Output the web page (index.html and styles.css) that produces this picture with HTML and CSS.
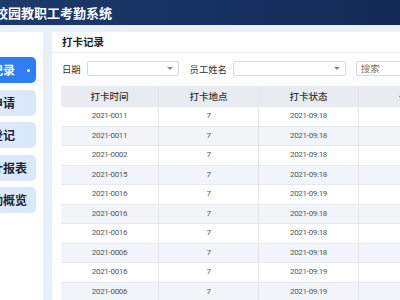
FILE: index.html
```html
<!DOCTYPE html>
<html lang="zh-CN">
<head>
    <meta charset="UTF-8" />
    <meta name="viewport" content="width=device-width, initial-scale=1.0"/>
    <title>校园教职工考勤系统</title>
    <link rel="stylesheet" href="styles.css">
</head>
<body>
    <header class="topbar">
        <h1 class="site-title">校园教职工考勤系统</h1>
    </header>
    <div class="layout">
        <aside class="sidebar">
            <a href="#" class="menu-item active">打卡记录<span class="dot"></span></a>
            <a href="#" class="menu-item">请假申请</a>
            <a href="#" class="menu-item">外出登记</a>
            <a href="#" class="menu-item">考勤统计报表</a>
            <a href="#" class="menu-item">每日出勤概览</a>
        </aside>
        <main class="panel">
            <div class="panel-title">打卡记录</div>
            <div class="panel-body">
                <div class="filters">
                    <label class="filter-label">日期</label>
                    <div class="select select-date"><span class="caret"></span></div>
                    <label class="filter-label">员工姓名</label>
                    <div class="select select-name"><span class="caret"></span></div>
                    <div class="search">搜索</div>
                </div>
                <table class="records">
                    <thead>
                        <tr>
                            <th>打卡时间</th>
                            <th>打卡地点</th>
                            <th>打卡状态</th>
                            <th>备注</th>
                        </tr>
                    </thead>
                    <tbody>
                        <tr><td>2021-0011</td><td>7</td><td>2021-09:18</td><td></td></tr>
                        <tr><td>2021-0011</td><td>7</td><td>2021-09:18</td><td></td></tr>
                        <tr><td>2021-0002</td><td>7</td><td>2021-09:18</td><td></td></tr>
                        <tr><td>2021-0015</td><td>7</td><td>2021-09:18</td><td></td></tr>
                        <tr><td>2021-0016</td><td>7</td><td>2021-09:19</td><td></td></tr>
                        <tr><td>2021-0016</td><td>7</td><td>2021-09:18</td><td></td></tr>
                        <tr><td>2021-0016</td><td>7</td><td>2021-09:18</td><td></td></tr>
                        <tr><td>2021-0006</td><td>7</td><td>2021-09:18</td><td></td></tr>
                        <tr><td>2021-0016</td><td>7</td><td>2021-09:19</td><td></td></tr>
                        <tr><td>2021-0006</td><td>7</td><td>2021-09:19</td><td></td></tr>
                    </tbody>
                </table>
            </div>
        </main>
    </div>
</body>
</html>
```

FILE: styles.css
```css
body {
    margin: 0;
    width: 400px;
    height: 300px;
    overflow: hidden;
    background: #eaf0f7;
    font-family: "Noto Sans CJK SC", "Noto Sans", sans-serif;
    color: #333;
}

.topbar {
    height: 25px;
    background: linear-gradient(90deg, #1c3a6c, #102a55);
    display: flex;
    align-items: center;
    overflow: hidden;
}

.site-title {
    margin: 0 0 0 -5px;
    font-size: 13px;
    font-weight: bold;
    color: #fff;
    white-space: nowrap;
    line-height: 1;
}

.layout {
    display: flex;
    gap: 9px;
    padding-top: 7px;
    height: 268px;
}

/* левое меню, частично за краем окна */
.sidebar {
    flex: none;
    width: 90px;
    margin-left: -60px;
    padding: 25px 7px 0 6px;
    background: #fff;
    display: flex;
    flex-direction: column;
    gap: 6.5px;
}

.menu-item {
    position: relative;
    display: block;
    height: 26px;
    line-height: 26px;
    border-radius: 5px;
    background: linear-gradient(90deg, #e4eefc, #d8e7fb);
    color: #1e2633;
    font-size: 12px;
    font-weight: bold;
    text-align: center;
    text-decoration: none;
    white-space: nowrap;
}

.menu-item.active {
    background: #2f7cf3;
    color: #fff;
}

.menu-item .dot {
    position: absolute;
    right: 6px;
    top: 11.5px;
    width: 3px;
    height: 3px;
    border-radius: 50%;
    background: #fff;
}

.panel {
    flex: 1;
    min-width: 0;
    background: #fff;
}

.panel-title {
    height: 20px;
    line-height: 20px;
    padding-left: 10px;
    font-size: 10.5px;
    font-weight: bold;
    color: #222;
    border-bottom: 1px solid #e8ecf1;
}

.panel-body {
    padding: 8px 0 0 9px;
}

.filters {
    display: flex;
    align-items: center;
    height: 15px;
    white-space: nowrap;
}

.filter-label {
    font-size: 9.3px;
    color: #333;
    margin-left: 1px;
}

.select {
    position: relative;
    flex: none;
    height: 13px;
    border: 1px solid #d5dae1;
    border-radius: 2px;
    background: #fff;
    margin: 0 10px 0 6px;
}

.select-date {
    width: 90px;
}

.select-name {
    width: 111px;
    margin-right: 10px;
}

.caret {
    position: absolute;
    right: 5px;
    top: 5px;
    border-left: 3px solid transparent;
    border-right: 3px solid transparent;
    border-top: 3px solid #888;
}

.search {
    flex: none;
    width: 80px;
    height: 13px;
    line-height: 13px;
    border: 1px solid #d5dae1;
    border-radius: 2px;
    padding-left: 4px;
    font-size: 9.5px;
    color: #777;
}

.records {
    margin-top: 10px;
    border-collapse: separate;
    border-spacing: 0;
    table-layout: fixed;
    width: 397px;
}

.records th,
.records td {
    width: 99px;
    padding: 0;
    text-align: center;
    border-left: 1px solid #e3e7ec;
    white-space: nowrap;
}

.records th:first-child,
.records td:first-child {
    width: 97px;
    border-left: none;
}

.records th {
    height: 20px;
    background: #e8ebef;
    font-size: 9.5px;
    font-weight: 500;
    color: #333;
}

.records td {
    height: 19.5px;
    box-shadow: inset 0 1px 0 #e6eaef;
    font-family: Roboto, "Noto Sans", sans-serif;
    font-size: 8px;
    letter-spacing: -0.3px;
    color: #555;
}

.records tbody tr:nth-child(even) td {
    background: #f1f5f9;
}
```
